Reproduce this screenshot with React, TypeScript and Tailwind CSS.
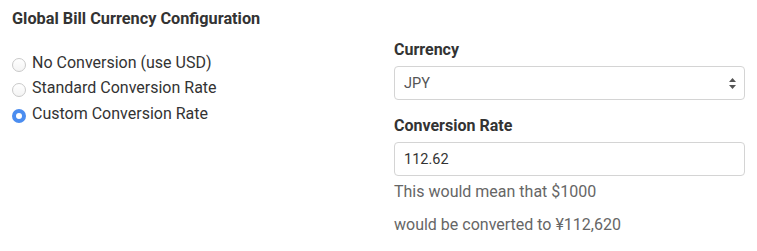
import { useState } from 'react';

const options = [
    { id: 'none', label: 'No Conversion (use USD)' },
    { id: 'standard', label: 'Standard Conversion Rate' },
    { id: 'custom', label: 'Custom Conversion Rate' },
];

function Radio({ checked }: { checked: boolean }) {
    if (checked) {
        return (
            <span className="mt-[4px] flex h-[14px] w-[14px] shrink-0 items-center justify-center rounded-full bg-[#4b8df0]">
                <span className="h-[6px] w-[6px] rounded-full bg-white" />
            </span>
        );
    }
    return (
        <span className="mt-[4px] h-[14px] w-[14px] shrink-0 rounded-full border border-[#c9c9c9] bg-gradient-to-b from-white to-[#f4f4f4]" />
    );
}

export default function App() {
    const [mode, setMode] = useState('custom');
    const [rate, setRate] = useState('112.62');

    return (
        <div className="h-[251px] w-[757px] bg-white px-3 font-['Roboto',sans-serif] text-[#333]">
            <h2 className="pt-[9px] text-[16.3px] font-bold leading-[20px]">Global Bill Currency Configuration</h2>

            <div className="mt-[11px] grid grid-cols-[382px_1fr]">
                <div className="flex flex-col pt-[10px]">
                    {options.map((o) => (
                        <label
                            key={o.id}
                            className="flex h-[25.5px] cursor-pointer items-center gap-[6px] text-[16px] leading-[20px]"
                            onClick={() => setMode(o.id)}
                        >
                            <Radio checked={mode === o.id} />
                            <span>{o.label}</span>
                        </label>
                    ))}
                </div>

                <div className="flex flex-col">
                    <div className="text-[16px] font-bold leading-[20px]">Currency</div>
                    <div className="relative mt-[6px] h-[34px] rounded-[4px] border border-[#d4d4d4] bg-white">
                        <span className="absolute left-[9px] top-[8px] text-[14.5px] leading-[17px] text-[#555]">JPY</span>
                        <svg className="absolute right-[8px] top-[11px]" width="7" height="11" viewBox="0 0 7 11">
                            <path d="M3.5 0 L7 4 L0 4 Z" fill="#555" />
                            <path d="M3.5 11 L7 7 L0 7 Z" fill="#555" />
                        </svg>
                    </div>

                    <div className="mt-[16px] text-[16px] font-bold leading-[20px]">Conversion Rate</div>
                    <input
                        value={rate}
                        onChange={(e) => setRate(e.target.value)}
                        className="mt-[6px] h-[34px] rounded-[4px] border border-[#d4d4d4] px-[9px] text-[14.5px] text-[#333] outline-none"
                    />
                    <p className="mt-[6px] text-[16px] leading-[20px] text-[#666]">This would mean that $1000</p>
                    <p className="mt-[13px] text-[16px] leading-[20px] text-[#666]">would be converted to ¥112,620</p>
                </div>
            </div>
        </div>
    );
}
